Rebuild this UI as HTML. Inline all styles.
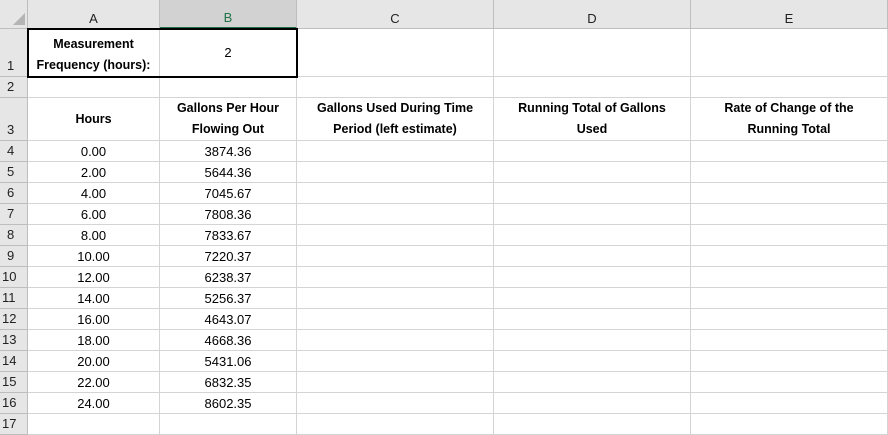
<!DOCTYPE html>
<html><head><meta charset="utf-8"><style>
*{margin:0;padding:0;box-sizing:border-box}
body{width:888px;height:434px;overflow:hidden;background:#fff;font-family:"Liberation Sans",Arial,sans-serif;font-size:13px;color:#000;position:relative}
.c{position:absolute;display:flex;justify-content:center;text-align:center;line-height:21px;border-right:1px solid #d4d4d4;border-bottom:1px solid #d4d4d4}
.h{background:#e6e6e6;color:#222;border-right:1px solid #bdbdbd;border-bottom:1px solid #bdbdbd}
.rh{justify-content:flex-start;padding-left:6px;align-items:flex-end}
.b{font-weight:bold;font-size:12.5px}
.m{align-items:center}
.e{align-items:flex-end}
</style></head><body>
<!-- top header -->
<div class="c h" style="left:0;top:0;width:28px;height:29px"></div>
<svg style="position:absolute;left:12px;top:12px" width="14" height="14"><polygon points="13,1 13,13 1,13" fill="#b4b4b4"/></svg>
<div class="c h m" style="left:28px;top:0;width:132px;height:29px;padding-top:8px">A</div>
<div class="c h m" style="left:160px;top:0;width:137px;height:29px;padding-top:8px;background:#d2d2d2;color:#217346;border-bottom:2px solid #217346">B</div>
<div class="c h m" style="left:297px;top:0;width:197px;height:29px;padding-top:8px">C</div>
<div class="c h m" style="left:494px;top:0;width:197px;height:29px;padding-top:8px">D</div>
<div class="c h m" style="left:691px;top:0;width:197px;height:29px;padding-top:8px">E</div>

<div id="g"></div>
<script>
var cols=[[28,132],[160,137],[297,197],[494,197],[691,197]];
var rows=[[29,48],[77,21],[98,43]];
for(var i=0;i<14;i++)rows.push([141+i*21,21]);
var data={
0:[['Measurement<br>Frequency (hours):','b e',1],['2','m']],
2:[['Hours','b m'],['Gallons Per Hour<br>Flowing Out','b e'],['Gallons Used During Time<br>Period (left estimate)','b e'],['Running Total of Gallons<br>Used','b e'],['Rate of Change of the<br>Running Total','b e']]};
var v=['3874.36','5644.36','7045.67','7808.36','7833.67','7220.37','6238.37','5256.37','4643.07','4668.36','5431.06','6832.35','8602.35'];
for(var i=0;i<13;i++)data[3+i]=[[(i*2).toFixed(2),'m'],[v[i],'m']];
var h='';
rows.forEach(function(r,ri){
 h+='<div class="c h rh" style="left:0;top:'+r[0]+'px;width:28px;height:'+r[1]+'px;padding-left:'+(ri>=9?2:7)+'px">'+(ri+1)+'</div>';
 cols.forEach(function(c,ci){
  var d=(data[ri]||[])[ci];var t=d?d[0]:'',cl=d?d[1]:'m';
  h+='<div class="c '+cl+'" style="left:'+c[0]+'px;top:'+r[0]+'px;width:'+c[1]+'px;height:'+r[1]+'px">'+t+'</div>';
 });
});
h+='<div style="position:absolute;left:27px;top:28px;width:271px;height:50px;border:2px solid #000"></div>';
document.getElementById('g').innerHTML=h;
</script>
</body></html>
